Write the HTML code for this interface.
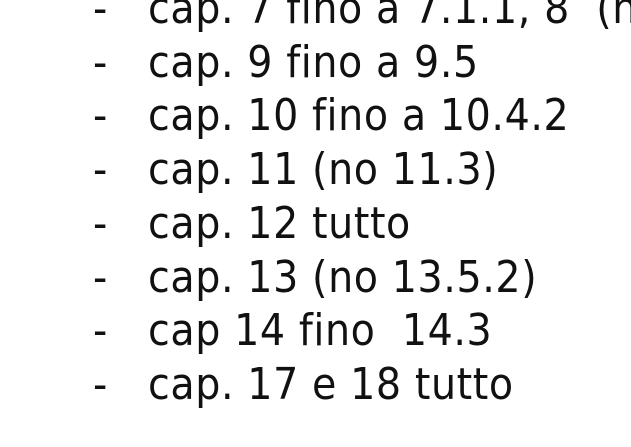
<!DOCTYPE html>
<html><head><meta charset="utf-8"><style>
html,body{margin:0;padding:0;background:#fff;width:631px;height:447px;overflow:hidden}
.l{position:absolute;left:0;font-family:"DejaVu Sans Condensed","DejaVu Sans",sans-serif;font-stretch:condensed;font-size:44px;line-height:53.7px;color:#111;white-space:pre;letter-spacing:0.6px}
.d{position:absolute;left:93px}
.t{position:absolute;left:148px}
</style></head><body>
<div class="l" style="top:-18px"><span class="d">-</span><span class="t">cap. 7 fino a 7.1.1, 8  (n</span></div>
<div class="l" style="top:35.7px"><span class="d">-</span><span class="t">cap. 9 fino a 9.5</span></div>
<div class="l" style="top:89.4px"><span class="d">-</span><span class="t">cap. 10 fino a 10.4.2</span></div>
<div class="l" style="top:143.1px"><span class="d">-</span><span class="t">cap. 11 (no 11.3)</span></div>
<div class="l" style="top:196.8px"><span class="d">-</span><span class="t">cap. 12 tutto</span></div>
<div class="l" style="top:250.5px"><span class="d">-</span><span class="t">cap. 13 (no 13.5.2)</span></div>
<div class="l" style="top:304.2px"><span class="d">-</span><span class="t">cap 14 fino  14.3</span></div>
<div class="l" style="top:357.9px"><span class="d">-</span><span class="t">cap. 17 e 18 tutto</span></div>
</body></html>
